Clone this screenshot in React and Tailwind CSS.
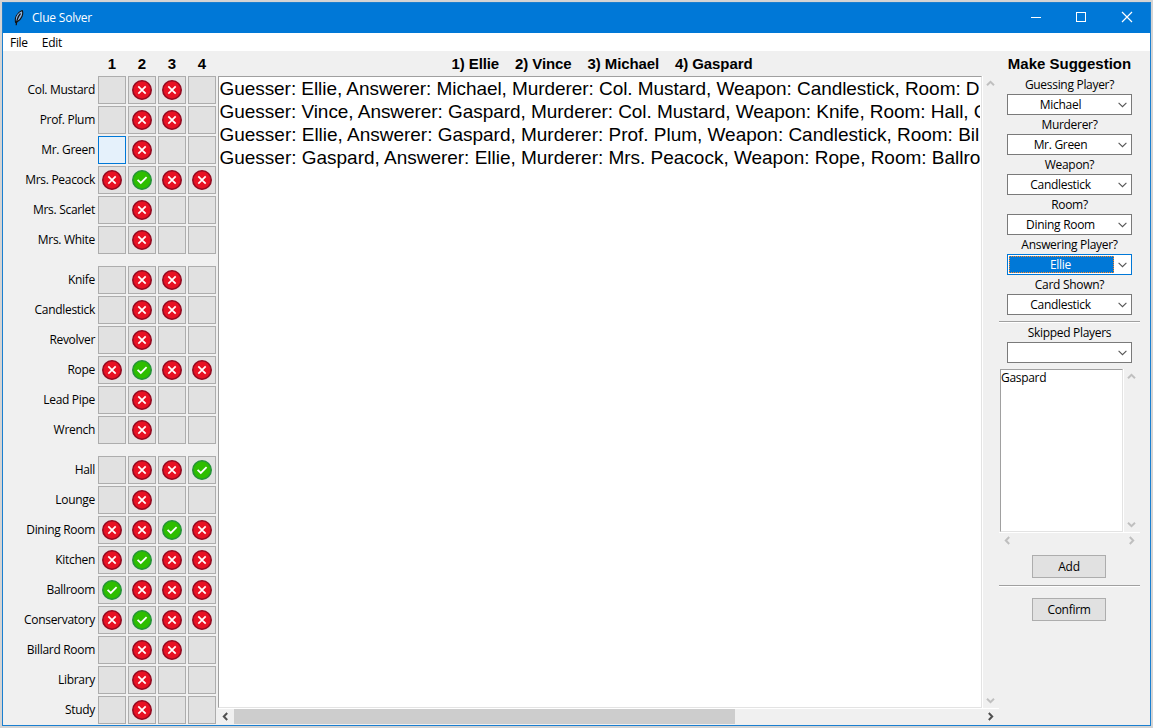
import React from "react";

const GROUPS = [
  [
    ["Col. Mustard", " xx "],
    ["Prof. Plum", " xx "],
    ["Mr. Green", "hx  "],
    ["Mrs. Peacock", "xvxx"],
    ["Mrs. Scarlet", " x  "],
    ["Mrs. White", " x  "],
  ],
  [
    ["Knife", " xx "],
    ["Candlestick", " xx "],
    ["Revolver", " x  "],
    ["Rope", "xvxx"],
    ["Lead Pipe", " x  "],
    ["Wrench", " x  "],
  ],
  [
    ["Hall", " xxv"],
    ["Lounge", " x  "],
    ["Dining Room", "xxvx"],
    ["Kitchen", "xvxx"],
    ["Ballroom", "vxxx"],
    ["Conservatory", "xvxx"],
    ["Billard Room", " xx "],
    ["Library", " x  "],
    ["Study", " x  "],
  ],
];

const LOG = [
  ["Guesser: Ellie, Answerer: Michael, Murderer: Col. Mustard, Weapon: Candlestick, Room: D", "tracking-[-0.06px]"],
  ["Guesser: Vince, Answerer: Gaspard, Murderer: Col. Mustard, Weapon: Knife, Room: Hall, C", "tracking-[-0.05px]"],
  ["Guesser: Ellie, Answerer: Gaspard, Murderer: Prof. Plum, Weapon: Candlestick, Room: Bil", "tracking-[-0.015px]"],
  ["Guesser: Gaspard, Answerer: Ellie, Murderer: Mrs. Peacock, Weapon: Rope, Room: Ballro", "tracking-[-0.015px]"],
];

const FIELDS = [
  ["Guessing Player?", "Michael"],
  ["Murderer?", "Mr. Green"],
  ["Weapon?", "Candlestick"],
  ["Room?", "Dining Room"],
  ["Answering Player?", "Ellie", true],
  ["Card Shown?", "Candlestick"],
];

function Mark({ kind }) {
  if (kind === "x")
    return (
      <svg width="20" height="20" viewBox="0 0 20 20">
        <circle cx="10" cy="10" r="9.2" fill="#e81123" stroke="#930a20" strokeWidth="1.6" />
        <path d="M6.3 6.3 13.7 13.7M13.7 6.3 6.3 13.7" stroke="#fff" strokeWidth="1.7" />
      </svg>
    );
  if (kind === "v")
    return (
      <svg width="20" height="20" viewBox="0 0 20 20">
        <circle cx="10" cy="10" r="9.2" fill="#2dbe00" stroke="#259238" strokeWidth="1.6" />
        <path d="M5.6 9.8 8.8 13 14.6 7.2" fill="none" stroke="#fff" strokeWidth="1.8" />
      </svg>
    );
  return null;
}

function Cell({ kind }) {
  const look = kind === "h" ? "border-[#0078d7] bg-[#e5f1fb]" : "border-[#adadad] bg-[#e1e1e1]";
  return (
    <div className={`flex h-7 w-7 items-center justify-center border ${look}`}>
      <Mark kind={kind} />
    </div>
  );
}

const ROTATION = { up: "rotate-180", down: "", left: "rotate-90", right: "-rotate-90" };

function Arrow({ dir, dark }) {
  return (
    <svg width="9" height="9" viewBox="0 0 9 9" className={ROTATION[dir]}>
      <path d="M1 2.8 4.5 6.2 8 2.8" fill="none" stroke={dark ? "#505050" : "#bfbfbf"} strokeWidth="2" />
    </svg>
  );
}

function Combo({ value, active }) {
  return (
    <div className={`flex h-[21px] w-[125px] border bg-white p-px ${active ? "border-[#0078d7]" : "border-[#7a7a7a]"}`}>
      <div
        className={`flex w-[105px] items-center justify-center pr-0.5 ${
          active ? "border border-dotted border-[#ff8728] bg-[#0078d7] text-white" : ""
        }`}
      >
        <span className="pt-px leading-4">{value}</span>
      </div>
      <div className="flex flex-1 items-center justify-center pt-px">
        <svg width="9" height="6" viewBox="0 0 9 6">
          <path d="M.6.8 4.5 4.7 8.4.8" fill="none" stroke="#555" strokeWidth="1.1" />
        </svg>
      </div>
    </div>
  );
}

function Separator() {
  return <div className="h-0.5 w-[141px] border-t border-b border-t-[#a0a0a0] border-b-white" />;
}

function Button({ children }) {
  return (
    <button className="mr-px flex h-[23px] w-[74px] items-center justify-center border border-[#adadad] bg-[#e1e1e1] pt-px">
      {children}
    </button>
  );
}

function VScroll() {
  return (
    <div className="flex w-4 flex-col items-center justify-between pt-[3px] pr-0.5 pb-[3px]">
      <Arrow dir="up" />
      <Arrow dir="down" />
    </div>
  );
}

export default function App() {
  return (
    <div className="h-[728px] w-[1153px] overflow-hidden bg-[#d4d4d4] pt-0.5 pl-0.5 font-['Open_Sans','Noto_Sans',sans-serif] text-[12px] tracking-[-0.3px] text-black">
      <div className="flex h-[724px] w-[1149px] flex-col border border-[#1a7fd0] bg-[#f0f0f0]">
        <header className="flex h-[30px] shrink-0 items-center bg-[#0078d7] text-white">
          <svg width="16" height="16" viewBox="0 0 16 16" className="ml-2">
            <path d="M4.6 12.5C3.6 8 5.5 3 11.2.6 12.8 3.5 10.5 9.8 6.2 11.8Z" fill="#8fb4e0" stroke="#111" strokeWidth="1.1" />
            <path d="M5.2 15.2C5.5 11 7 6.5 9.5 3.5" fill="none" stroke="#111" strokeWidth="1.2" />
          </svg>
          <span className="ml-[5px] tracking-[-0.2px]">Clue Solver</span>
          <div className="ml-auto flex">
            <svg width="138" height="30" viewBox="0 0 138 30" fill="none" stroke="#fff" strokeWidth="1">
              <path d="M19 14.5h10" />
              <rect x="64.5" y="9.5" width="9" height="9" />
              <path d="m110 9 10 10M120 9l-10 10" strokeWidth="1.2" />
            </svg>
          </div>
        </header>
        <nav className="flex h-[18px] shrink-0 items-center gap-[14px] bg-white pt-0.5 pl-[7px]">
          <span>File</span>
          <span>Edit</span>
        </nav>
        <main className="flex flex-1">
          <section className="w-[214px] shrink-0">
            <div className="flex h-6 justify-end gap-0.5 pr-px font-['Liberation_Sans',sans-serif] text-[15px] font-bold tracking-normal">
              {["1", "2", "3", "4"].map((n) => (
                <div key={n} className="flex w-7 items-center justify-center pt-0.5">{n}</div>
              ))}
            </div>
            <div className="flex flex-col gap-2.5">
              {GROUPS.map((rows, g) => (
                <div key={g}>
                  {rows.map(([name, marks]) => (
                    <div key={name} className="flex h-[30px] items-center justify-end gap-0.5 pr-px">
                      <span className="pr-px">{name}</span>
                      {marks.split("").map((m, i) => (
                        <Cell key={i} kind={m} />
                      ))}
                    </div>
                  ))}
                </div>
              ))}
            </div>
          </section>
          <section className="ml-px flex w-[781px] shrink-0 flex-col font-['Liberation_Sans',sans-serif] tracking-normal">
            <div className="flex h-[25px] items-center justify-center gap-4 pt-px pr-[13px] text-[15px] font-bold tracking-[-0.1px]">
              <span>1) Ellie</span>
              <span>2) Vince</span>
              <span>3) Michael</span>
              <span>4) Gaspard</span>
            </div>
            <div className="flex h-[632px]">
              <div className="w-[764px] border border-t-[#a0a0a0] border-r-[#e3e3e3] border-b-[#e3e3e3] border-l-[#a0a0a0] bg-white pr-px text-[19px] leading-[23px] whitespace-nowrap">
                {LOG.map(([line, tracking]) => (
                  <div key={line} className={`overflow-hidden pl-[0.5px] ${tracking}`}>{line}</div>
                ))}
              </div>
              <div className="w-px bg-white" />
              <VScroll />
            </div>
            <div className="h-px shrink-0 bg-white" />
            <div className="flex h-4 items-center pr-1 pb-px pl-[3px]">
              <Arrow dir="left" dark />
              <div className="ml-1 h-[15px] w-[501px] bg-[#cdcdcd]" />
              <div className="ml-auto flex">
                <Arrow dir="right" dark />
              </div>
            </div>
          </section>
          <aside className="flex w-[141px] shrink-0 flex-col items-center">
            <h2 className="flex h-6 items-center pt-0.5 font-['Liberation_Sans',sans-serif] text-[15px] font-bold tracking-normal whitespace-nowrap">
              Make Suggestion
            </h2>
            {FIELDS.map(([label, value, active]) => (
              <div key={label} className="flex h-10 flex-col items-center">
                <div className="flex h-[19px] items-center pt-px">{label}</div>
                <Combo value={value} active={active} />
              </div>
            ))}
            <div className="h-1.5" />
            <Separator />
            <div className="flex h-[19px] items-center pt-px">Skipped Players</div>
            <Combo value="" />
            <div className="mt-1.5 flex h-[163px] w-[141px] pl-px">
              <div className="w-[123px] border border-t-[#a0a0a0] border-r-[#e3e3e3] border-b-[#e3e3e3] border-l-[#a0a0a0] bg-white leading-4">
                Gaspard
              </div>
              <div className="w-px bg-white" />
              <VScroll />
            </div>
            <div className="h-px w-[141px] bg-white" />
            <div className="flex h-4 w-[141px] items-center justify-between px-1 pb-0.5">
              <Arrow dir="left" />
              <Arrow dir="right" />
            </div>
            <div className="h-1.5" />
            <Button>Add</Button>
            <div className="h-[7px]" />
            <Separator />
            <div className="h-[11px]" />
            <Button>Confirm</Button>
          </aside>
        </main>
      </div>
    </div>
  );
}
